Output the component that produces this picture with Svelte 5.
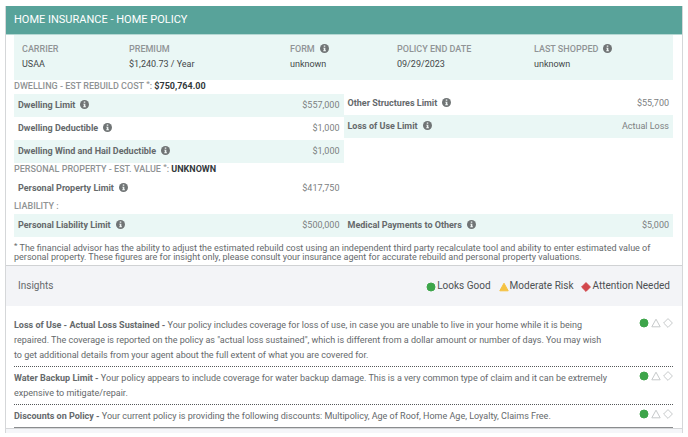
<script lang="ts">
	type Limit = { label: string; value: string; shaded?: boolean };

	const SUMMARY = [
		{ label: 'CARRIER', value: 'USAA' },
		{ label: 'PREMIUM', value: '$1,240.73 / Year' },
		{ label: 'FORM', value: 'unknown', info: true },
		{ label: 'POLICY END DATE', value: '09/29/2023' },
		{ label: 'LAST SHOPPED', value: 'unknown', info: true }
	];

	const DWELLING: Limit[] = [
		{ label: 'Dwelling Limit', value: '$557,000', shaded: true },
		{ label: 'Dwelling Deductible', value: '$1,000' },
		{ label: 'Dwelling Wind and Hail Deductible', value: '$1,000', shaded: true }
	];
	const OTHER: Limit[] = [
		{ label: 'Other Structures Limit', value: '$55,700' },
		{ label: 'Loss of Use Limit', value: 'Actual Loss', shaded: true }
	];
	const PROPERTY: Limit[] = [{ label: 'Personal Property Limit', value: '$417,750' }];
	const LIABILITY: Limit[] = [{ label: 'Personal Liability Limit', value: '$500,000', shaded: true }];
	const MEDICAL: Limit[] = [{ label: 'Medical Payments to Others', value: '$5,000', shaded: true }];

	const INSIGHTS = [
		{
			title: 'Loss of Use - Actual Loss Sustained',
			text: 'Your policy includes coverage for loss of use, in case you are unable to live in your home while it is being repaired. The coverage is reported on the policy as "actual loss sustained", which is different from a dollar amount or number of days. You may wish to get additional details from your agent about the full extent of what you are covered for.'
		},
		{
			title: 'Water Backup Limit',
			text: 'Your policy appears to include coverage for water backup damage. This is a very common type of claim and it can be extremely expensive to mitigate/repair.'
		},
		{
			title: 'Discounts on Policy',
			text: 'Your current policy is providing the following discounts: Multipolicy, Age of Roof, Home Age, Loyalty, Claims Free.'
		}
	];
</script>

{#snippet info(label: string)}
	<button class="info" type="button" aria-label="About {label}">
		<svg viewBox="0 0 16 16" aria-hidden="true">
			<circle cx="8" cy="8" r="8" />
			<path d="M6.7 2.7h2.7v2.4H6.7zM5.8 6.5h3.7v4.7h1v1.7H5.8v-1.7h1V8.2h-1z" />
		</svg>
	</button>
{/snippet}

{#snippet mark(kind: string, on: boolean)}
	<svg class="mark {kind}" class:on viewBox="0 0 10 10" aria-hidden="true">
		{#if kind === 'good'}
			<circle cx="5" cy="5" r="4" />
		{:else if kind === 'risk'}
			<path d="M5 1.2 9.2 8.8H.8z" />
		{:else}
			<path d="M5 .6 9.4 5 5 9.4.6 5z" />
		{/if}
	</svg>
{/snippet}

{#snippet limits(rows: Limit[])}
	<dl class="limits">
		{#each rows as row (row.label)}
			<div class="limit" class:shaded={row.shaded}>
				<dt>{row.label}{@render info(row.label)}</dt>
				<dd>{row.value}</dd>
			</div>
		{/each}
	</dl>
{/snippet}

<main class="policy">
	<h1>HOME INSURANCE - HOME POLICY</h1>

	<section class="details">
		<dl class="summary">
			{#each SUMMARY as item (item.label)}
				<div>
					<dt>{item.label}{#if item.info}{@render info(item.label)}{/if}</dt>
					<dd>{item.value}</dd>
				</div>
			{/each}
		</dl>

		<div class="columns">
			<div>
				<h2>DWELLING - EST REBUILD COST <sup>*</sup>: <strong>$750,764.00</strong></h2>
				{@render limits(DWELLING)}
			</div>
			<div class="beside">
				{@render limits(OTHER)}
			</div>
		</div>

		<h2>PERSONAL PROPERTY - EST. VALUE <sup>*</sup>: <strong>UNKNOWN</strong></h2>
		<div class="columns">
			{@render limits(PROPERTY)}
		</div>

		<h2>LIABILITY :</h2>
		<div class="columns">
			{@render limits(LIABILITY)}
			{@render limits(MEDICAL)}
		</div>

		<p class="footnote">
			<sup>*</sup> The financial advisor has the ability to adjust the estimated rebuild cost using an independent
			third party recalculate tool and ability to enter estimated value of personal property. These figures
			are for insight only, please consult your insurance agent for accurate rebuild and personal property
			valuations.
		</p>
	</section>

	<header class="insights-bar">
		<h3>Insights</h3>
		<ul class="legend">
			<li>{@render mark('good', true)}Looks Good</li>
			<li>{@render mark('risk', true)}Moderate Risk</li>
			<li>{@render mark('alert', true)}Attention Needed</li>
		</ul>
	</header>

	<ul class="insights">
		{#each INSIGHTS as item (item.title)}
			<li>
				<p><strong>{item.title} -</strong> {item.text}</p>
				<div class="rating" role="img" aria-label="Looks Good">
					{@render mark('good', true)}
					{@render mark('risk', false)}
					{@render mark('alert', false)}
				</div>
			</li>
		{/each}
	</ul>
	<div class="end"></div>
</main>

<style>
	:global(body) {
		background: #fff;
	}
	.policy {
		margin: 6px 5px 0;
		border: 1px solid #d5d7d9;
		border-top: 0;
		border-bottom: 0;
		font-family: Roboto, 'Liberation Sans', sans-serif;
		font-size: 9px;
		line-height: 15px;
		color: #65696b;
	}
	h1,
	h2,
	h3,
	p,
	dl,
	dd,
	ul {
		margin: 0;
		padding: 0;
	}
	ul {
		list-style: none;
	}
	h1 {
		padding: 0 8px;
		background: #58a39a;
		border-bottom: 1px solid #b5d8d3;
		color: #fff;
		font-size: 11px;
		font-weight: 400;
		line-height: 28px;
	}
	.details {
		padding: 0 9px 0 8px;
	}
	.summary {
		display: grid;
		grid-template-columns: 107fr 161fr 107fr 137fr 139fr;
		padding: 7px 0 8px 8px;
		background: #eaf7f5;
	}
	.summary dt {
		color: #909495;
		font-weight: 500;
	}
	.summary dd {
		color: #44484a;
	}
	.info {
		width: 9px;
		height: 9px;
		margin: 0 0 0 5px;
		padding: 0;
		border: 0;
		background: none;
		vertical-align: -1px;
	}
	.info svg {
		display: block;
		width: 100%;
		height: 100%;
		fill: #707475;
	}
	.info path {
		fill: #eef4f3;
	}
	h2 {
		padding-bottom: 1px;
		color: #8f9394;
		font-size: 9px;
		font-weight: 500;
		line-height: 13px;
	}
	h2 strong {
		color: #33383b;
		font-weight: 700;
	}
	sup {
		font-size: 8px;
		line-height: 0;
		vertical-align: 3px;
	}
	.columns {
		display: grid;
		grid-template-columns: 1fr 1fr;
	}
	.beside {
		padding-top: 12px;
	}
	.limit {
		display: flex;
		justify-content: space-between;
		padding: 4px;
	}
	.limit.shaded {
		background: #eaf7f5;
	}
	.limit dt {
		font-weight: 700;
	}
	.limit dd {
		color: #7c8081;
	}
	.footnote {
		padding: 7px 0 3px;
		line-height: 9px;
	}
	.insights-bar {
		display: flex;
		justify-content: space-between;
		align-items: center;
		padding: 0 12px;
		border-top: 1px solid #d0d2d4;
		background: #f3f4f7;
		font-size: 10px;
		line-height: 40px;
	}
	h3 {
		font-size: 10px;
		font-weight: 400;
	}
	.legend {
		display: flex;
		gap: 8px;
		color: #4d5153;
	}
	.mark {
		width: 10px;
		height: 10px;
		fill: #fff;
		stroke: #c6c9ca;
		stroke-width: 1;
		stroke-linejoin: round;
	}
	.legend .mark {
		margin-right: 1px;
		vertical-align: -3px;
	}
	.good.on {
		fill: #3da54a;
		stroke: #3da54a;
	}
	.risk.on {
		fill: #f5c242;
		stroke: #f5c242;
	}
	.alert.on {
		fill: #d2474c;
		stroke: #d2474c;
	}
	.insights {
		padding: 8px 9px 0 8px;
	}
	.insights li {
		display: flex;
		justify-content: space-between;
		gap: 30px;
		padding: 4px 0 3px;
		border-bottom: 1px dotted #55585a;
	}
	.insights li:last-child {
		border-bottom: 1px solid #8a8c8e;
	}
	.rating {
		display: flex;
		gap: 2px;
		flex-shrink: 0;
	}
	.end {
		height: 4px;
		border-top: 1px solid #d5d7d9;
		background: #f5f6f9;
	}
</style>
